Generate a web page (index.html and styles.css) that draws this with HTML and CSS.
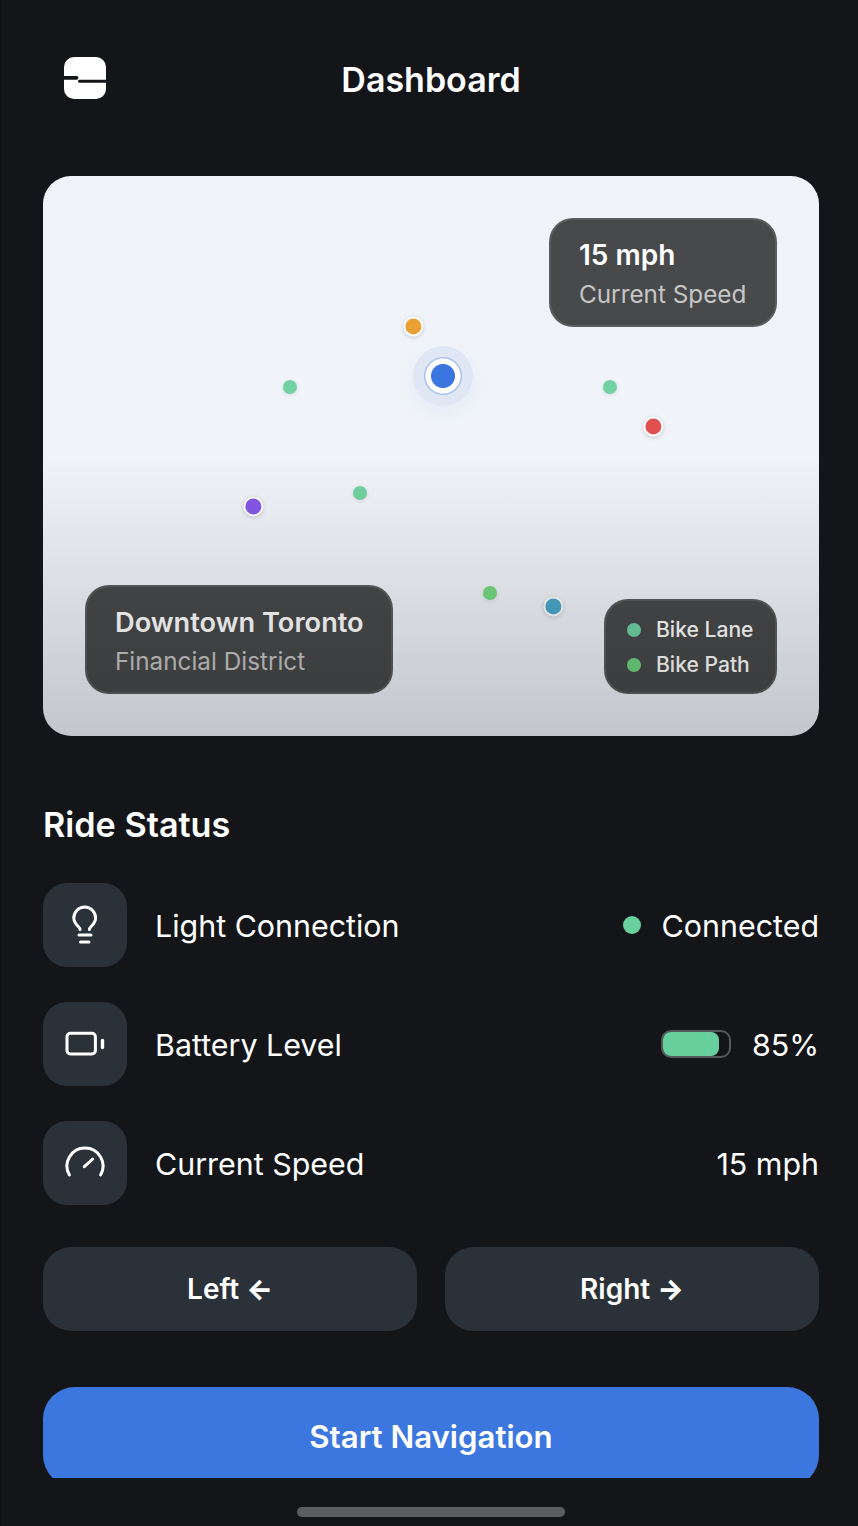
FILE: index.html
```html
<!DOCTYPE html>
<html lang="en">
<head>
<meta charset="utf-8">
<title>Dashboard</title>
<link rel="stylesheet" href="styles.css">
</head>
<body>
<div class="screen">
  <main class="content">
    <header class="topbar">
      <svg class="logo" width="42" height="42" viewBox="0 0 42 42" aria-hidden="true">
        <rect width="42" height="42" rx="10" fill="#fff"/>
        <path d="M0 20.800h12.500" stroke="#131518" stroke-width="3.800" stroke-linecap="round"/>
        <path d="M15.500 24.300h26.500" stroke="#131518" stroke-width="3" stroke-linecap="round"/>
      </svg>
      <h1 class="title">Dashboard</h1>
    </header>

    <section class="map">
      <span class="halo"></span>
      <span class="pin pin-orange"></span>
      <span class="pin pin-red"></span>
      <span class="pin pin-purple"></span>
      <span class="pin pin-teal"></span>
      <span class="dot dot-a"></span>
      <span class="dot dot-b"></span>
      <span class="dot dot-c"></span>
      <span class="dot dot-d"></span>

      <div class="panel panel-speed">
        <div class="panel-main">15 mph</div>
        <div class="panel-sub">Current Speed</div>
      </div>
      <div class="panel panel-place">
        <div class="panel-main place-name">Downtown Toronto</div>
        <div class="panel-sub">Financial District</div>
      </div>
      <div class="panel panel-legend">
        <div class="legend-row"><i class="legend-dot lane"></i>Bike Lane</div>
        <div class="legend-row"><i class="legend-dot path"></i>Bike Path</div>
      </div>
      <div class="shade"></div>
    </section>

    <h2 class="section-title">Ride Status</h2>

    <ul class="rows">
      <li class="row">
        <span class="icon-box">
          <svg width="48" height="48" viewBox="0 0 48 48" fill="none" stroke="#fff" stroke-width="3" stroke-linecap="round" stroke-linejoin="round" aria-hidden="true">
            <path d="M19 28.500c0-3-6.200-5-6.200-11.500a10.900 10.900 0 0 1 21.800 0c0 6.500-6.200 8.500-6.200 11.500"/>
            <path d="M18 34h12M19.500 41h8.500"/>
          </svg>
        </span>
        <span class="row-label row-text">Light Connection</span>
        <span class="row-value"><i class="status-dot"></i><span class="row-text">Connected</span></span>
      </li>
      <li class="row">
        <span class="icon-box">
          <svg width="48" height="48" viewBox="0 0 48 48" fill="none" stroke="#fff" stroke-width="3" stroke-linecap="round" stroke-linejoin="round" aria-hidden="true">
            <rect x="6" y="13.300" width="28.400" height="20.700" rx="3.500"/>
            <path d="M41.500 20.500v7" stroke-width="3.400"/>
          </svg>
        </span>
        <span class="row-label row-text">Battery Level</span>
        <span class="row-value"><span class="battery"><span class="battery-fill"></span></span><span class="row-text">85%</span></span>
      </li>
      <li class="row">
        <span class="icon-box">
          <svg width="48" height="48" viewBox="0 0 48 48" fill="none" stroke="#fff" stroke-width="3" stroke-linecap="round" stroke-linejoin="round" aria-hidden="true">
            <path d="M8.400 36A18 18 0 1 1 39.600 36"/>
            <path d="M23.300 27.700 31.700 20"/>
          </svg>
        </span>
        <span class="row-label row-text">Current Speed</span>
        <span class="row-value"><span class="row-text">15 mph</span></span>
      </li>
    </ul>

    <div class="turns">
      <button class="btn btn-turn">Left <span class="arrow">←</span></button>
      <button class="btn btn-turn">Right <span class="arrow">→</span></button>
    </div>

    <button class="btn btn-start">Start Navigation</button>
  </main>
  <div class="home-bar"></div>
</div>
</body>
</html>
```

FILE: styles.css
```css
* { box-sizing: border-box; }
html, body { margin: 0; padding: 0; height: 100%; }
body {
  background: #131518;
  font-family: Inter, "Liberation Sans", sans-serif;
  color: #fff;
  overflow: hidden;
}
.screen {
  width: 858px;
  height: 1526px;
  display: flex;
  flex-direction: column;
  border-left: 1px solid #0f1114;
}
.content {
  height: 1478px;
  overflow: hidden;
  padding: 0 39px 0 42px;
  flex: none;
}
.topbar {
  position: relative;
  height: 176px;
  padding-top: 57px;
  padding-left: 21px;
}
.logo { display: block; }
.title {
  position: absolute;
  left: 0;
  right: 0;
  top: 57px;
  margin: 0;
  font-size: 34px;
  line-height: 46px;
  font-weight: 600;
  text-align: center;
}
.map {
  position: relative;
  height: 560px;
  border-radius: 28px;
  overflow: hidden;
  background: #f0f4f9;
}
.shade {
  position: absolute;
  inset: 0;
  pointer-events: none;
  background: linear-gradient(to bottom, rgba(0, 0, 0, 0) 50%, rgba(0, 0, 0, 0.19) 100%);
}
.halo {
  position: absolute;
  left: 370px;
  top: 170px;
  width: 60px;
  height: 60px;
  border-radius: 50%;
  background: radial-gradient(circle, #3b76e0 0 11.500px, #fff 12.500px 17px, #a9c3ef 18px 18.500px, #e0e7f4 19.500px);
  box-shadow: 0 8px 16px rgba(60, 118, 223, 0.06);
}
.pin {
  position: absolute;
  width: 20px;
  height: 20px;
  border-radius: 50%;
  border: 2px solid #fff;
  box-shadow: 0 1px 4px rgba(0, 0, 0, 0.18);
  transform: translate(0.4px, 0.4px);
}
.pin-orange { left: 360px; top: 140px; background: #e9a136; }
.pin-red { left: 600px; top: 240px; background: #e05050; }
.pin-purple { left: 200px; top: 320px; background: #8558e8; }
.pin-teal { left: 500px; top: 420px; background: #4ba8cc; }
.dot {
  position: absolute;
  width: 14px;
  height: 14px;
  border-radius: 50%;
  box-shadow: 0 1px 4px rgba(0, 0, 0, 0.1);
}
.dot-a { left: 240px; top: 204px; background: #72d2a1; }
.dot-b { left: 560px; top: 204px; background: #72d2a1; }
.dot-c { left: 310px; top: 310px; background: #72d2a1; }
.dot-d { left: 440px; top: 410px; background: #74d884; }
.panel {
  position: absolute;
  background: rgba(0, 0, 0, 0.7);
  border: 2px solid rgba(255, 255, 255, 0.1);
}
.panel-speed {
  right: 42px;
  top: 42px;
  width: 228px;
  height: 109px;
  padding: 18px 28px;
  border-radius: 24px;
}
.panel-place {
  left: 42px;
  bottom: 42px;
  width: 308px;
  height: 109px;
  padding: 20px 28px 0;
  border-radius: 24px;
}
.panel-main {
  font-size: 28px;
  line-height: 34px;
  font-weight: 600;
  white-space: nowrap;
}
.place-name {
  font-size: 27.200px;
  line-height: 32px;
}
.panel-sub {
  margin-top: 7px;
  font-size: 24.300px;
  line-height: 30px;
  color: rgba(255, 255, 255, 0.7);
  white-space: nowrap;
}
.panel-legend {
  right: 42px;
  bottom: 42px;
  width: 173px;
  height: 95px;
  padding: 15px 21px 0;
  border-radius: 24px;
  display: flex;
  flex-direction: column;
  gap: 8px;
}
.legend-row {
  display: flex;
  align-items: center;
  gap: 15px;
  font-size: 21.100px;
  line-height: 27px;
  font-weight: 500;
  white-space: nowrap;
}
.legend-dot { width: 14px; height: 14px; border-radius: 50%; flex: none; }
.lane { background: #6ed3a3; }
.path { background: #6fd57f; }
.section-title {
  margin: 68px 0 0;
  font-size: 34.200px;
  line-height: 42px;
  font-weight: 600;
}
.rows {
  list-style: none;
  margin: 37px 0 0;
  padding: 0;
  display: flex;
  flex-direction: column;
  gap: 35px;
}
.row {
  display: flex;
  align-items: center;
  gap: 28px;
  height: 84px;
  font-size: 30.400px;
}
.row-text { padding-top: 2px; }
.icon-box {
  width: 84px;
  height: 84px;
  border-radius: 24px;
  background: #2b3138;
  display: flex;
  align-items: center;
  justify-content: center;
  flex: none;
}
.row-label { flex: 1; }
.row-value {
  display: flex;
  align-items: center;
  gap: 21px;
}
.status-dot {
  width: 18px;
  height: 18px;
  border-radius: 50%;
  background: #68d09c;
}
.battery {
  display: block;
  width: 70px;
  height: 28px;
  border: 2px solid #55575a;
  border-radius: 10px;
}
.battery-fill {
  display: block;
  width: 85%;
  height: 100%;
  border-radius: 8px;
  background: #68d09c;
}
.turns {
  display: grid;
  grid-template-columns: 1fr 1fr;
  gap: 28px;
  margin-top: 42px;
}
.btn {
  display: block;
  border: 0;
  padding: 0;
  color: #fff;
  font-family: inherit;
  font-weight: 600;
}
.btn-turn {
  height: 84px;
  border-radius: 28px;
  background: #2b3138;
  font-size: 28px;
}
.arrow { font-weight: 800; }
.btn-start {
  width: 100%;
  height: 100px;
  margin-top: 56px;
  border-radius: 32px;
  background: #3c76df;
  font-size: 31.200px;
}
.home-bar {
  width: 268px;
  height: 10px;
  margin: 29px 0 0 296px;
  border-radius: 5px;
  background: #5c5d60;
}
```
